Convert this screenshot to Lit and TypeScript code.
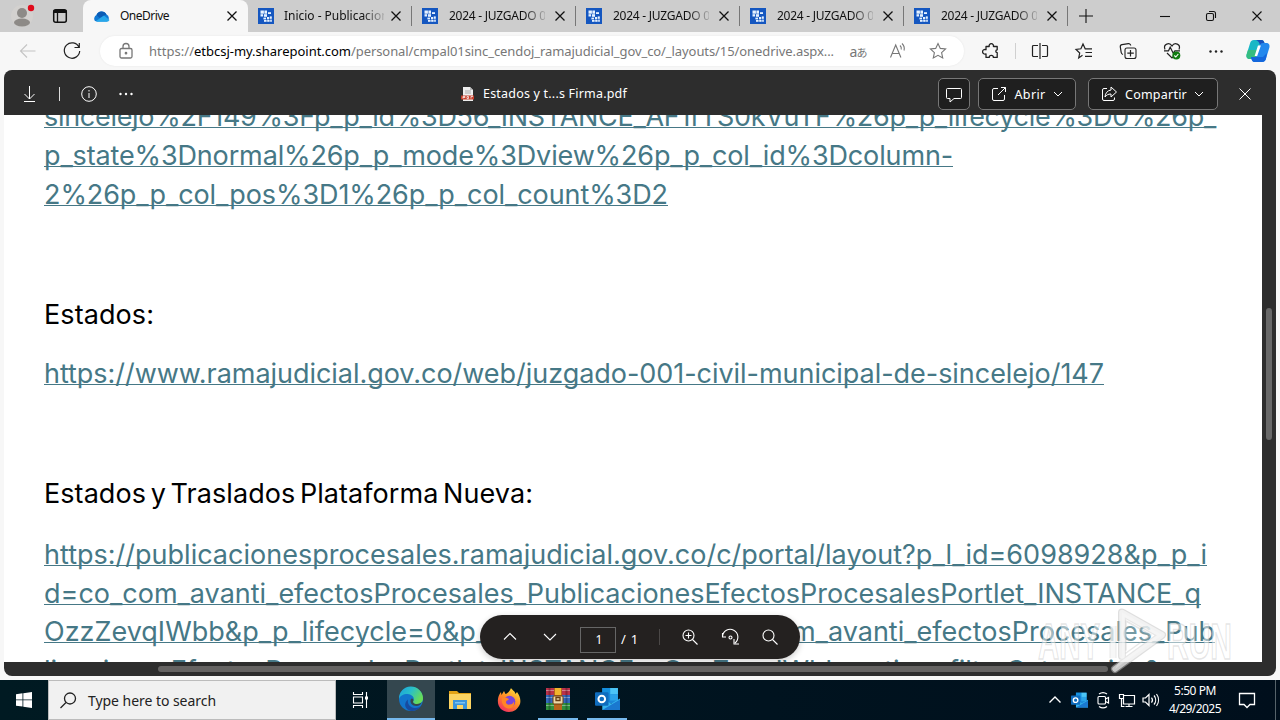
import { LitElement, html, css, svg, TemplateResult } from "lit";
import { customElement, property } from "lit/decorators.js";

/* A run of text whose tracking is adjusted so that it spans a given width. */
@customElement("fit-text")
class FitText extends LitElement {
  static styles = css`
    :host { display: inline-block; white-space: pre; }
    .run { display: inline-block; white-space: pre; text-decoration: var(--run-decoration, none); text-decoration-skip-ink: none; text-underline-offset: 1px; }
  `;
  @property() text = "";
  @property({ type: Number }) span = 0;
  updated() {
    const run = this.renderRoot.querySelector(".run") as HTMLElement;
    run.style.letterSpacing = "0px";
    const natural = run.getBoundingClientRect().width;
    if (this.span > 0) run.style.letterSpacing = (this.span - natural) / this.text.length + "px";
  }
  render() {
    return html`<span class="run">${this.text}</span>`;
  }
}

const fit = (text: string, span: number) => html`<fit-text .text=${text} .span=${span}></fit-text>`;

const icon = (body: TemplateResult, size = 20, cls = "") =>
  html`<svg class="ic ${cls}" width=${size} height=${size} viewBox="0 0 ${size} ${size}">${body}</svg>`;

const close = svg`<path d="M5.5 5.5l9 9M14.5 5.5l-9 9"/>`;
const favicon = html`<svg class="fav" width="16" height="16" viewBox="0 0 16 16">
  <rect width="16" height="16" fill="#1557c0"/>
  <g fill="#e6f2ff"><rect x="2.5" y="2.5" width="3.4" height="3.2"/><rect x="6.4" y="2.5" width="2.6" height="3.2"/>
  <rect x="2.5" y="6.2" width="2.6" height="2.3"/><rect x="6" y="6.2" width="3" height="2.6"/><rect x="10" y="4.2" width="3" height="1.8"/>
  <rect x="5.4" y="9.6" width="2.6" height="1.8"/><rect x="9" y="9" width="2.2" height="2.4"/><rect x="11.8" y="8.4" width="2" height="2.4"/>
  <rect x="6" y="12" width="2.6" height="1.8"/><rect x="9.2" y="12" width="2.4" height="1.8"/><rect x="12.2" y="11.6" width="1.6" height="2.2"/></g></svg>`;

const chevron = html`<svg class="ic" width="12" height="12" viewBox="0 0 12 12"><path d="M2 4l4 4 4-4"/></svg>`;

const outlook = (size: number) => html`<svg width=${size} height=${size} viewBox="0 0 24 24">
  <rect x="7" y="1" width="15" height="15" fill="#1a86d8"/><rect x="14.5" y="1" width="7.5" height="6" fill="#4bc5f5"/>
  <rect x="7" y="1" width="7.5" height="6" fill="#1490df"/><rect x="14.5" y="7" width="7.5" height="6" fill="#2aa3e8"/>
  <path d="M7 11l8.500 5L24 11v11H7z" fill="#35b4ee"/><path d="M7 22L24 12v10z" fill="#1a78cf"/>
  <rect x="0" y="5" width="13" height="13" rx="1" fill="#0f6cbd"/><circle cx="6.500" cy="11.500" r="3.200" fill="none" stroke="#fff" stroke-width="1.900"/></svg>`;

@customElement("app-root")
class AppRoot extends LitElement {
  static styles = css`
    :host { display: block; width: 1280px; height: 720px; overflow: hidden; background: #f7f7f7;
      font-family: "Noto Sans", "Open Sans", sans-serif; font-size: 12px; color: #111; }
    * { box-sizing: border-box; }
    .screen { display: flex; flex-direction: column; height: 720px; position: relative; }
    .row { display: flex; align-items: center; }
    .ic { fill: none; stroke: currentColor; stroke-width: 1.1; flex: none; display: block; }
    .cell { display: flex; align-items: center; justify-content: center; flex: none; }
    .w24 { width: 24px; } .w40 { width: 40px; } .w44 { width: 44px; } .w46 { width: 46px; } .w48 { width: 48px; }

    .tabs { height: 32px; background: #cdcdcd; flex: none; }
    .profile { width: 44px; } .spaces { width: 32px; margin-right: 7px; }
    .tab { height: 32px; width: 164px; display: flex; align-items: center; padding: 0 6px 0 10px; flex: none; }
    .tab.active { width: 165px; background: #f7f7f7; border-radius: 8px 8px 0 0; }
    .tab .label { margin: 0 5px 0 11px; overflow: hidden; flex: 1; height: 20px; line-height: 20px; }
    .tab.active .label { margin-left: 9px; }
    .tab.second .label { margin: 0 2px 0 10px; }
    .tab.faded .label { -webkit-mask-image: linear-gradient(90deg, #000 78%, transparent 104%); mask-image: linear-gradient(90deg, #000 78%, transparent 104%); }
    .tab .ic { stroke-width: 1.3; }
    .divider { width: 1px; height: 20px; background: #777; margin-left: -1px; flex: none; }
    .plus { width: 36px; } .grow { flex: 1; }

    .tools { height: 38px; flex: none; color: #222; }
    .back { width: 56px; color: #c4c4c4; } .reload { width: 32px; margin-right: 12px; }
    .address { width: 864px; height: 30px; border-radius: 15px; background: #fff; color: #777; flex: none; box-shadow: 0 0 2px #e4e4e4; }
    .lock { width: 49px; padding-left: 3px; }
    .url { font-size: 13px; line-height: 20px; width: 689px; white-space: nowrap; }
    .host { color: #000; }
    .jp { font: 14px "Noto Sans", "Noto Sans CJK JP", sans-serif; letter-spacing: -1px; }
    .jp small { font-size: 11px; }
    .ext { width: 51px; padding-left: 5px; } .bar { width: 1px; height: 16px; background: #d0d0d0; margin-right: 2px; flex: none; }

    .viewer { margin: 0 4px 4px; height: 606px; border-radius: 8px; background: #2d2d2d; overflow: hidden; display: flex; flex-direction: column; color: #fff; position: relative; flex: none; }
    .head { height: 45px; flex: none; padding-top: 3px; }
    .head .ic { stroke-width: 1; }
    .dl { width: 50px; } .pipe { width: 1px; height: 14px; background: #ddd; margin: 0 5px 0 5px; } .info { width: 48px; } .more { width: 25px; padding-left: 1px; }
    .filename { margin-left: 323px; font-size: 12.5px; gap: 8px; width: 477px; line-height: 20px; }
    .btn { height: 32px; border: 1px solid #777; border-radius: 5px; background: #1f1f1f; display: flex; align-items: center; justify-content: center; font-size: 12.5px; flex: none; }
    .comment { width: 32px; margin-right: 8px; } .open { width: 98px; gap: 6px; margin-right: 12px; padding-right: 2px; } .share { width: 130px; gap: 6px; padding-right: 2px; }
    .exit { width: 54px; }
    .body { display: flex; height: 547px; }
    .page { width: 1258px; background: #fff; overflow: hidden; padding-left: 40px; color: #000; font-family: Inter, "Liberation Sans", sans-serif; font-size: 27px; word-spacing: -3px; }
    .line { display: block; height: 39px; line-height: 40px; white-space: nowrap; }
    .line fit-text { height: 39px; }
    .long .line { height: 38.7px; }
    .link { color: #467886; --run-decoration: underline 1px; }
    .p0 { margin-top: -18px; } .p1 { margin-top: 81px; } .p2 { margin-top: 20px; } .p3 { margin-top: 81px; } .p4 { margin-top: 22px; }
    .vtrack { width: 14px; padding: 193px 4px 0; }
    .vthumb { width: 6px; height: 132px; border-radius: 3px; background: #686868; }
    .htrack { padding: 4px 0 0 154px; }
    .hthumb { width: 950px; height: 6px; border-radius: 3px; background: #656362; }

    .float { position: absolute; left: 476px; top: 545px; width: 320px; height: 44px; border-radius: 22px; background: #242120; font-size: 12px; padding-left: 10px; box-shadow: 0 2px 6px #0003; }
    .pageno { width: 36px; height: 26px; border: 1px solid #666; display: flex; align-items: center; justify-content: center; margin: 5px 5px 0 10px; flex: none; padding-left: 2px; }
    .total { width: 38px; padding-top: 4px; font-size: 13px; white-space: nowrap; flex: none; }
    .fsep { width: 1px; height: 16px; background: #4b4847; margin-right: 10px; }
    .mark { position: absolute; left: 1034px; top: 604px; }
    .marktext { font: bold 50px "Liberation Sans", sans-serif; fill: #ffffff80; stroke: #c4c4c470; stroke-width: 1.5; }

    .taskbar { height: 40px; background: linear-gradient(90deg, #001a22, #00131f 60%, #000f1c); color: #fff; flex: none; }
    .search { width: 288px; height: 40px; background: #f1f1f1; border: 1px solid #bcbcbc; color: #222; padding-left: 9px; font-size: 14px; gap: 10px; flex: none; line-height: 20px; padding-top: 1px; }
    .app { height: 40px; width: 49px; display: flex; align-items: center; justify-content: center; flex: none; }
    .view { width: 51px; padding-right: 2px; } .edge { width: 48px; background: #34474f; border-bottom: 2px solid #76b9ed; }
    .run { width: 40px; margin: 0 4px 0 5px; border-bottom: 2px solid #76b9ed; }
    .clock { width: 68px; text-align: center; font-size: 12px; line-height: 18px; margin-left: -2px; }
    .notif { width: 36px; } .desktop { width: 1px; height: 40px; background: #56636a; margin: 0 4px 0 10px; }
  `;

  tab(label: string, span: number, cls = "") {
    return html`<div class="tab faded ${cls}">${favicon}<span class="label">${fit(label, span)}</span>${icon(close)}</div><span class="divider"></span>`;
  }

  line(text: string, span: number) {
    return html`<span class="line">${fit(text, span)}</span>`;
  }

  render() {
    return html`<div class="screen">
      <div class="tabs row">
        <div class="cell profile">
          <svg width="26" height="26" viewBox="0 0 26 26"><circle cx="13" cy="13" r="11" fill="#d3d1cf"/><circle cx="13" cy="10" r="5" fill="#8d8a87"/><ellipse cx="13" cy="19.500" rx="8" ry="4" fill="#8d8a87"/><circle cx="22" cy="5" r="3.200" fill="#e00b1c"/></svg>
        </div>
        <div class="cell spaces">${icon(svg`<rect x="3.700" y="3.700" width="12.600" height="12.600" rx="2" stroke-width="1.500"/><path d="M3.500 5.500h13" stroke-width="3"/><path d="M7.500 6v10" stroke-width="1.300"/>`)}</div>
        <div class="tab active">
          <svg width="18" height="16" viewBox="0 0 18 16"><path d="M2 13a4 4 0 0 1 1.500-6A5.500 5.500 0 0 1 13.500 6.500 4 4 0 0 1 14 13.500H4z" fill="#0f78d4"/><path d="M3.500 7A5.500 5.500 0 0 1 13.500 6.500L6.500 10z" fill="#0b5cb5"/><path d="M3 13l8-5.500 5.500 4.500a3 3 0 0 1-2.500 1.800H4z" fill="#28a8ea"/></svg>
          <span class="label">${fit("OneDrive", 49)}</span>${icon(close)}
        </div>
        ${this.tab("Inicio - Publicaciones", 117, "second")}
        ${this.tab("2024 - JUZGADO 001", 110)}${this.tab("2024 - JUZGADO 001", 110)}${this.tab("2024 - JUZGADO 001", 110)}${this.tab("2024 - JUZGADO 001", 110)}
        <div class="cell plus">${icon(svg`<path d="M10 3v14M3 10h14"/>`)}</div>
        <div class="grow"></div>
        <div class="cell w46">${icon(svg`<path d="M5 10.500h10"/>`)}</div>
        <div class="cell w46">${icon(svg`<rect x="5.500" y="7.500" width="7" height="7" rx="1.500"/><path d="M8 5.500h4.500a2 2 0 0 1 2 2V12"/>`)}</div>
        <div class="cell w46">${icon(close)}</div>
      </div>

      <div class="tools row">
        <div class="cell back">${icon(svg`<path d="M17.500 10h-15M9 3.500L2.500 10 9 16.500"/>`)}</div>
        <div class="cell reload">${icon(svg`<path d="M17 6.300A7.700 7.700 0 1 0 17.700 10M17.300 2v4.500h-4.800" stroke-width="1.200"/>`)}</div>
        <div class="address row">
          <div class="cell lock">${icon(svg`<rect x="4" y="7.500" width="12" height="9.500" rx="1.500" stroke-width="1.300"/><path d="M7 7.500V5.500a3 3 0 0 1 6 0v2" stroke-width="1.300"/><circle cx="10" cy="12.200" r=".8" fill="currentColor"/>`)}</div>
          <div class="url">${fit("https://", 45)}<span class="host">${fit("etbcsj-my.sharepoint.com", 157)}</span>${fit("/personal/cmpal01sinc_cendoj_ramajudicial_gov_co/_layouts/15/onedrive.aspx...", 483)}</div>
          <div class="cell w40"><span class="jp">a<small>あ</small></span></div>
          <div class="cell w40">${icon(svg`<path d="M2.500 16.500L7.700 4l5.200 12.500M4.300 12.500h6.800M12 4.500a4 4 0 0 1 1.200 4M14 2.500a7 7 0 0 1 2 7"/>`)}</div>
          <div class="cell w40">${icon(svg`<path d="M10 2.500l2.300 4.900 5.300.6-4 3.700 1.100 5.300-4.700-2.700L5.300 17l1.100-5.300-4-3.700 5.300-.6z"/>`)}</div>
        </div>
        <div class="cell ext">${icon(svg`<path d="M4 5.500h3.200a2.200 2.200 0 1 1 4.200 0h3.800v3.300a1.400 1.400 0 0 0 0 2.800v4.800h-3.800a2.100 2.100 0 0 0-4.200 0H4v-3.600a2.300 2.300 0 1 1 0-4z" stroke-width="1.300" stroke-linejoin="round"/>`)}</div>
        <span class="bar"></span>
        <div class="cell w44">${icon(svg`<path d="M8 4.500H3.500a1 1 0 0 0-1 1v9a1 1 0 0 0 1 1H8M12 4.500h4.500a1 1 0 0 1 1 1v9a1 1 0 0 1-1 1H12M10 2v16" stroke-width="1.200"/>`)}</div>
        <div class="cell w44">${icon(svg`<path d="M8.500 14.300L4.700 17l1-5-3.700-3.600 4.900-.6L9 3l2.200 4.800H18M11.500 11.500H18M11 15.300h7" stroke-width="1.200"/>`)}</div>
        <div class="cell w44">${icon(svg`<rect x="7" y="7" width="11" height="10.500" rx="2"/><path d="M12.500 9v6.500M9.300 12.200h6.500M5 13.500a2.500 2.500 0 0 1-1.800-2L2.300 5.800a2 2 0 0 1 1.700-2.200l6.400-.9a2 2 0 0 1 2.300 1.800" stroke-width="1.200"/>`)}</div>
        <div class="cell w44">${icon(svg`<path d="M3 8.500C.8 3 7.500.8 10 5c2.500-4.200 9.200-2 7 3.500M5 12l5 5 1.500-1.500M2 9.800h4.500l1.700-3.600 3 6 1.700-2.400H18" stroke-width="1.200"/><circle cx="14.300" cy="14.500" r="4" fill="#107c10" stroke="none"/><path d="M12.300 14.500l1.500 1.500 2.500-3" stroke="#fff"/>`)}</div>
        <div class="cell w44">${icon(svg`<g fill="currentColor" stroke="none"><circle cx="4.500" cy="10.500" r="1.200"/><circle cx="10" cy="10.500" r="1.200"/><circle cx="15.500" cy="10.500" r="1.200"/></g>`)}</div>
        <div class="cell w40">
          <svg width="24" height="24" viewBox="0 0 24 24"><path d="M8 1h7.500c2 0 2.500 1.500 3 3l.5 2h-5L10.500 17C9.800 19 9 20 7 20H4C1 20 0 18 .6 15.500L4 4.500C4.600 2.500 5.500 1 8 1z" fill="#18b7c6"/><path d="M8 1h7.500c2 0 2.500 1.500 3 3l.5 2h-5c-1-3-2-5-6-5z" fill="#174fbc"/><path d="M.6 15.500L2 11h8l2-2-1.500 8C9.800 19 9 20 7 20H4C1 20 0 18 .6 15.500z" fill="#35bd80"/><path d="M16 23H8.500c-2 0-2.500-1.500-3-3L5 18h5l3.500-11c.7-2 1.500-3 3.500-3h3c3 0 4 2 3.400 4.500L20 19.500c-.6 2-1.500 3.500-4 3.500z" fill="#2388ed"/><path d="M16 23H8.500c-2 0-2.500-1.500-3-3L5 18h12l4-4-1 5.500c-.6 2-1.500 3.500-4 3.500z" fill="#1467dc"/><path d="M10.500 16l3-8.500h-.8L10 16z" fill="#fff" stroke="#fff" stroke-width="2"/></svg>
        </div>
      </div>

      <div class="viewer">
        <div class="head row">
          <div class="cell dl">${icon(svg`<path d="M10.500 2v13M5.500 10l5 5 5-5M5 17.500h11"/>`)}</div>
          <span class="pipe"></span>
          <div class="cell info">${icon(svg`<circle cx="10" cy="10" r="7.300"/><path d="M10 9v5M10 6v1.500"/>`)}</div>
          <div class="cell more">${icon(svg`<g fill="currentColor" stroke="none"><circle cx="4.500" cy="10" r="1.200"/><circle cx="10" cy="10" r="1.200"/><circle cx="15.500" cy="10" r="1.200"/></g>`)}</div>
          <div class="filename row">
            <svg width="14" height="16" viewBox="0 0 14 16"><path d="M2 1h7l3 3v11H2z" fill="#eee"/><path d="M9 1v3h3" fill="#bbb"/><path d="M4 5h6M4 7h6" stroke="#aaa"/><path d="M0 9.500h13v4H0z" fill="#c8402c"/><path d="M2 12.500v-2h2v1H2M6 12.500v-2h1.500v2zM10 12.500v-2h2" fill="none" stroke="#fff" stroke-width=".7"/></svg>
            ${fit("Estados y t...s Firma.pdf", 144)}
          </div>
          <div class="btn comment">${icon(svg`<path d="M3.500 4.500h13a1 1 0 0 1 1 1v8a1 1 0 0 1-1 1H10L6 18v-3.500H3.500a1 1 0 0 1-1-1v-8a1 1 0 0 1 1-1z"/>`)}</div>
          <div class="btn open">${icon(svg`<path d="M9 4.500H5a1.500 1.500 0 0 0-1.500 1.500v9A1.500 1.500 0 0 0 5 16.500h9a1.500 1.500 0 0 0 1.500-1.500v-4M12 3.500h4.500V8M16.500 3.500L9 11"/>`)}${fit("Abrir", 31)}${chevron}</div>
          <div class="btn share">${icon(svg`<path d="M8 4.500H5A1.500 1.500 0 0 0 3.500 6v9A1.500 1.500 0 0 0 5 16.500h9a1.500 1.500 0 0 0 1.500-1.500v-1.500M12 3l5.500 5-5.500 5v-3c-3 0-4.500 1-6 3 .3-4 2.500-6.500 6-7z"/>`)}${fit("Compartir", 62)}${chevron}</div>
          <div class="cell exit">${icon(svg`<path d="M4.500 4.500l11 11M15.500 4.500l-11 11"/>`)}</div>
        </div>
        <div class="body">
          <div class="page">
            <div class="link p0">
              ${this.line("sincelejo%2F149%3Fp_p_id%3D56_INSTANCE_AF1fTS0kVuTF%26p_p_lifecycle%3D0%26p_", 1172)}
              ${this.line("p_state%3Dnormal%26p_p_mode%3Dview%26p_p_col_id%3Dcolumn-", 909)}
              ${this.line("2%26p_p_col_pos%3D1%26p_p_col_count%3D2", 624)}
            </div>
            <div class="p1">${this.line("Estados:", 110)}</div>
            <div class="link p2">${this.line("https://www.ramajudicial.gov.co/web/juzgado-001-civil-municipal-de-sincelejo/147", 1060)}</div>
            <div class="p3">${this.line("Estados y Traslados Plataforma Nueva:", 489)}</div>
            <div class="link p4 long">
              ${this.line("https://publicacionesprocesales.ramajudicial.gov.co/c/portal/layout?p_l_id=6098928&p_p_i", 1163)}
              ${this.line("d=co_com_avanti_efectosProcesales_PublicacionesEfectosProcesalesPortlet_INSTANCE_q", 1157)}
              ${this.line("OzzZevqIWbb&p_p_lifecycle=0&p_p_state=normal&_co_com_avanti_efectosProcesales_Pub", 1171)}
              ${this.line("licacionesEfectosProcesalesPortlet_INSTANCE_qOzzZevqIWbb_action=filterCategories&", 1117)}
            </div>
          </div>
          <div class="vtrack"><div class="vthumb"></div></div>
        </div>
        <div class="htrack"><div class="hthumb"></div></div>

        <div class="float row">
          <div class="cell w40">${icon(svg`<path d="M4 12.500l6-6 6 6"/>`)}</div>
          <div class="cell w40">${icon(svg`<path d="M4 7l6 6 6-6"/>`)}</div>
          <div class="pageno">1</div><div class="total">${fit("/ 1", 18)}</div><span class="fsep"></span>
          <div class="cell w40">${icon(svg`<circle cx="8.500" cy="8.500" r="5.500"/><path d="M12.500 12.500l5 5M5.500 8.500h6M8.500 5.500v6"/>`)}</div>
          <div class="cell w40">${icon(svg`<path d="M2.500 6v4h3.500M2.500 9.500a7.700 7.700 0 1 1 12.500 6.500M14 12v5h5"/><circle cx="10.500" cy="10.500" r="1.500"/>`)}</div>
          <div class="cell w40">${icon(svg`<circle cx="8.500" cy="8.500" r="5.500"/><path d="M12.500 12.500l5 5"/>`)}</div>
        </div>
      </div>

      <div class="taskbar row">
        <div class="cell w48"><svg width="16" height="16" viewBox="0 0 16 16" fill="#fff"><path d="M0 2.200l6.500-.9v6.200H0zM7.300 1.200L16 0v7.500H7.300zM0 8.300h6.500v6.300L0 13.700zM7.300 8.300H16V16l-8.700-1.200z"/></svg></div>
        <div class="search row">${icon(svg`<circle cx="12" cy="7.500" r="5.500" stroke-width="1.300"/><path d="M8 11.500L2.500 17" stroke-width="1.300"/>`)}${fit("Type here to search", 128)}</div>
        <div class="app view">${icon(svg`<path d="M2.500 2v2.500h9V2M2.500 18v-2.500h9V18M2.500 7h9v6h-9zM15.500 2v16"/><path d="M14 6.500h3v3h-3z" fill="currentColor" stroke="none"/>`)}</div>
        <div class="app edge">
          <svg width="26" height="26" viewBox="0 0 26 26"><defs><linearGradient id="eg" x1="0" y1="0" x2="1" y2=".5"><stop offset="0" stop-color="#1ba0dd"/><stop offset=".5" stop-color="#29bfc9"/><stop offset="1" stop-color="#68dc57"/></linearGradient></defs>
          <circle cx="13" cy="13" r="12" fill="#1275cc"/><path d="M1 13A12 12 0 0 1 25 12c.3 4-3 6-6 6-4 0-4.500-2-3.500-3.500C17 12 14 8 9.500 8 5 8 2 10 1 13z" fill="url(#eg)"/><path d="M10 13.500c-1 4 2 8.500 7 8.500 2.500 0 4.500-1 6-2-2 3.500-6 5-10 5-6-1-8-8-3-11.500z" fill="#174ba0"/><path d="M15.500 14.500C14.500 16 15 18 19 18c2 0 3.600-.7 4.700-1.700-.8 2.700-3 3.800-5.400 3.700-4 0-6.700-3-5.600-6.500.7-2 3-1 2.800 1z" fill="#34474f"/></svg>
        </div>
        <div class="app">
          <svg width="24" height="24" viewBox="0 0 24 24"><path d="M1 3h8l2 2h12v4H1z" fill="#e3a316"/><path d="M1 6h22v15H1z" fill="#fcd462"/><path d="M5 12h14v9h-4v-4H9v4H5z" fill="#3b95dc"/><path d="M7 14h10v1.500H7z" fill="#7cc3f2"/></svg>
        </div>
        <div class="app">
          <svg width="26" height="26" viewBox="0 0 26 26"><defs><linearGradient id="ff" x1=".8" y1="0" x2=".2" y2="1"><stop offset="0" stop-color="#ffe340"/><stop offset=".5" stop-color="#ff8a24"/><stop offset="1" stop-color="#f02965"/></linearGradient></defs>
          <path d="M15 1c1 2 4 3 4.500 6L21 5c3 4 4 8 3 12-2 5-6 8-11 8C5 25 1 19 2 12c.3-3 1.500-5 3-7l.5 3L8 4l1.500 3C12 6 14 4 15 1z" fill="url(#ff)"/><circle cx="13.500" cy="14.500" r="5.800" fill="#7a45dc"/><path d="M6 11c3-1 5 0 7 1-1 2-3 1-3 3.500 0 1.500 2 2.500 4 2 2-.3 3-1 4-3 1 5-3 7.500-6 7-4-.4-7-5-6-10.500z" fill="#ff8526"/></svg>
        </div>
        <div class="app run">
          <svg width="26" height="24" viewBox="0 0 26 24"><path d="M1 1h24v7H1z" fill="#b9324b"/><path d="M1 8h24v8H1z" fill="#3469bd"/><path d="M1 16h24v7H1z" fill="#2f8f3e"/><path d="M1 3.500h24M1 10.500h24M1 18.500h24" stroke="#ffffff60"/><path d="M4.500 1v22M21.500 1v22" stroke="#00000040" stroke-width="2"/><path d="M9 1h8v22H9z" fill="#b8651c"/><path d="M10 1h6v7h-6z" fill="#f2b42c"/><rect x="8" y="9" width="10" height="8" rx="1" fill="#ecd8a6" stroke="#693c11"/><path d="M11 13.500h4v-3h-4z" fill="none" stroke="#693c11" stroke-width="1.300"/></svg>
        </div>
        <div class="app run">${outlook(25)}</div>
        <div class="grow"></div>
        <div class="cell w24">${icon(svg`<path d="M4.500 12.500L10 7l5.500 5.500" stroke-width="1.400"/>`)}</div>
        <div class="cell w24">${outlook(17)}</div>
        <div class="cell w24">${icon(svg`<rect x="5" y="6.500" width="7.500" height="7.500" rx="1"/><path d="M12.500 9l3-1.500v5.500l-3-1.500M6 4a7 7 0 0 1 8 0M6 16.500a7 7 0 0 0 8 0" stroke-width="1.200"/>`)}</div>
        <div class="cell w24">${icon(svg`<path d="M7 5.500h10.500v8.500H6.500V9M12 14v2.500M8.500 16.500h7M2.500 4.500h4v4h-4zM4.500 8.500v8h3" stroke-width="1.200"/>`)}</div>
        <div class="cell w24">${icon(svg`<path d="M2 8v4h2.500L8 15.500v-11L4.500 8zM10.500 7.500a4 4 0 0 1 0 5M13 5.500a7 7 0 0 1 0 9M15.500 4a10 10 0 0 1 0 12" stroke-width="1.200"/>`)}</div>
        <div class="clock">${fit("5:50 PM", 42)}<br>${fit("4/29/2025", 52)}</div>
        <div class="cell notif">${icon(svg`<path d="M2.500 3.500h15v11h-4.500L10 17.500 7 14.500H2.500z" stroke-width="1.300"/>`)}</div>
        <span class="desktop"></span>
      </div>

      <svg class="mark" width="204" height="72" viewBox="0 0 204 72">
        <text class="marktext" x="4" y="55" textLength="62" lengthAdjust="spacingAndGlyphs">ANY</text>
        <path d="M79 22v32" stroke="#c8c8c860" stroke-width="7"/><path d="M79 22v32" stroke="#ffffffa0" stroke-width="5"/>
        <g fill="none" stroke-linejoin="round" stroke-linecap="round">
          <path d="M88 52V8.500L128 31 81 65" stroke="#c0c0c080" stroke-width="8"/>
          <path d="M88 52V8.500L128 31 81 65" fill="#ffffff40" stroke="#ffffff98" stroke-width="5.500"/>
          <path d="M92 46V17l25 14-25 18" stroke="#c0c0c060" stroke-width="1.500"/>
        </g>
        <text class="marktext" x="133" y="55" textLength="65" lengthAdjust="spacingAndGlyphs">RUN</text>
      </svg>
    </div>`;
  }
}
